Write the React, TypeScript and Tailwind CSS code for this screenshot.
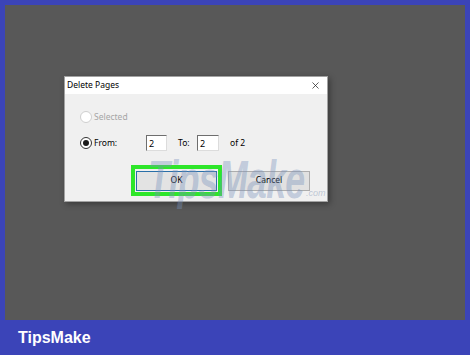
import { X } from "lucide-react";

function Radio({ checked, disabled }: { checked?: boolean; disabled?: boolean }) {
  return (
    <span
      className={`flex h-[12px] w-[12px] shrink-0 items-center justify-center rounded-full border bg-white ${
        disabled ? "border-[#cfcfcf] bg-[#f4f4f4]" : "border-[#333333]"
      }`}
    >
      {checked && <span className="h-[6px] w-[6px] rounded-full bg-[#1a1a1a]" />}
    </span>
  );
}

function NumberBox({ value, width }: { value: string; width: string }) {
  return (
    <div
      className={`${width} flex h-[16px] items-center border-t border-l border-t-[#6e6e6e] border-l-[#6e6e6e] border-r border-b border-r-[#dcdcdc] border-b-[#dcdcdc] bg-white pl-[2px] text-[9px] leading-none text-black`}
    >
      {value}
    </div>
  );
}

export default function App() {
  return (
    <div className="flex h-[355px] w-[470px] flex-col bg-[#3b44b8] font-['Noto_Sans',sans-serif]">
      {/* screenshot area */}
      <div className="mx-[5px] mt-[5px] h-[315px] bg-[#585858] pl-[59px] pt-[71px]">
        <div className="relative w-[264px] border border-[#a2a2a2] bg-[#f0f0f0] shadow-[2px_2px_6px_rgba(0,0,0,0.35)]">
          {/* title bar */}
          <div className="flex h-[17px] items-center justify-between bg-white pl-[2px] pr-[6px]">
            <span className="text-[8.5px] leading-none text-black">Delete Pages</span>
            <X className="h-[11px] w-[11px] text-[#222]" strokeWidth={1.6} />
          </div>

          {/* body */}
          <div className="flex flex-col pl-[15px] pt-[15px] pb-[5px] text-[8.5px] leading-none">
            <div className="flex h-[16px] items-center gap-[2px]">
              <Radio disabled />
              <span className="text-[#a6a6a6]">Selected</span>
            </div>

            <div className="mt-[10px] flex h-[16px] items-center">
              <Radio checked />
              <span className="ml-[2px] w-[52px] text-black">From:</span>
              <NumberBox value="2" width="w-[21px]" />
              <span className="ml-[11px] w-[19px] text-black">To:</span>
              <NumberBox value="2" width="w-[22px]" />
              <span className="ml-[11px] text-black">of 2</span>
            </div>

            <div className="mt-[14px] flex items-center pl-[51px]">
              <div className="flex h-[31px] w-[91px] items-center justify-center border-4 border-[#2ee62a]">
                <div className="flex h-[20px] w-[81px] items-center justify-center border border-[#2a6fa8] bg-[#e3e3e3] text-black">
                  OK
                </div>
              </div>
              <div className="ml-[6px] flex h-[20px] w-[82px] items-center justify-center border border-[#adadad] bg-[#e1e1e1] text-black">
                Cancel
              </div>
            </div>
          </div>

          {/* watermark */}
          <div className="pointer-events-none absolute left-[83px] top-[75px] flex items-end">
            <span className="origin-left scale-x-[0.66] font-['Liberation_Sans',sans-serif] text-[54px] font-bold italic leading-none tracking-[-1px] text-[#7891bb]/40">
              TipsMake
            </span>
          </div>
          <span className="pointer-events-none absolute left-[241px] top-[110px] font-['Liberation_Sans',sans-serif] text-[9px] italic text-[#8a9cb8]/50">
            .com
          </span>
        </div>
      </div>

      {/* brand bar */}
      <div className="flex flex-1 items-center pl-[18px]">
        <span className="font-['Liberation_Sans',sans-serif] text-[16px] font-bold text-white">TipsMake</span>
      </div>
    </div>
  );
}
